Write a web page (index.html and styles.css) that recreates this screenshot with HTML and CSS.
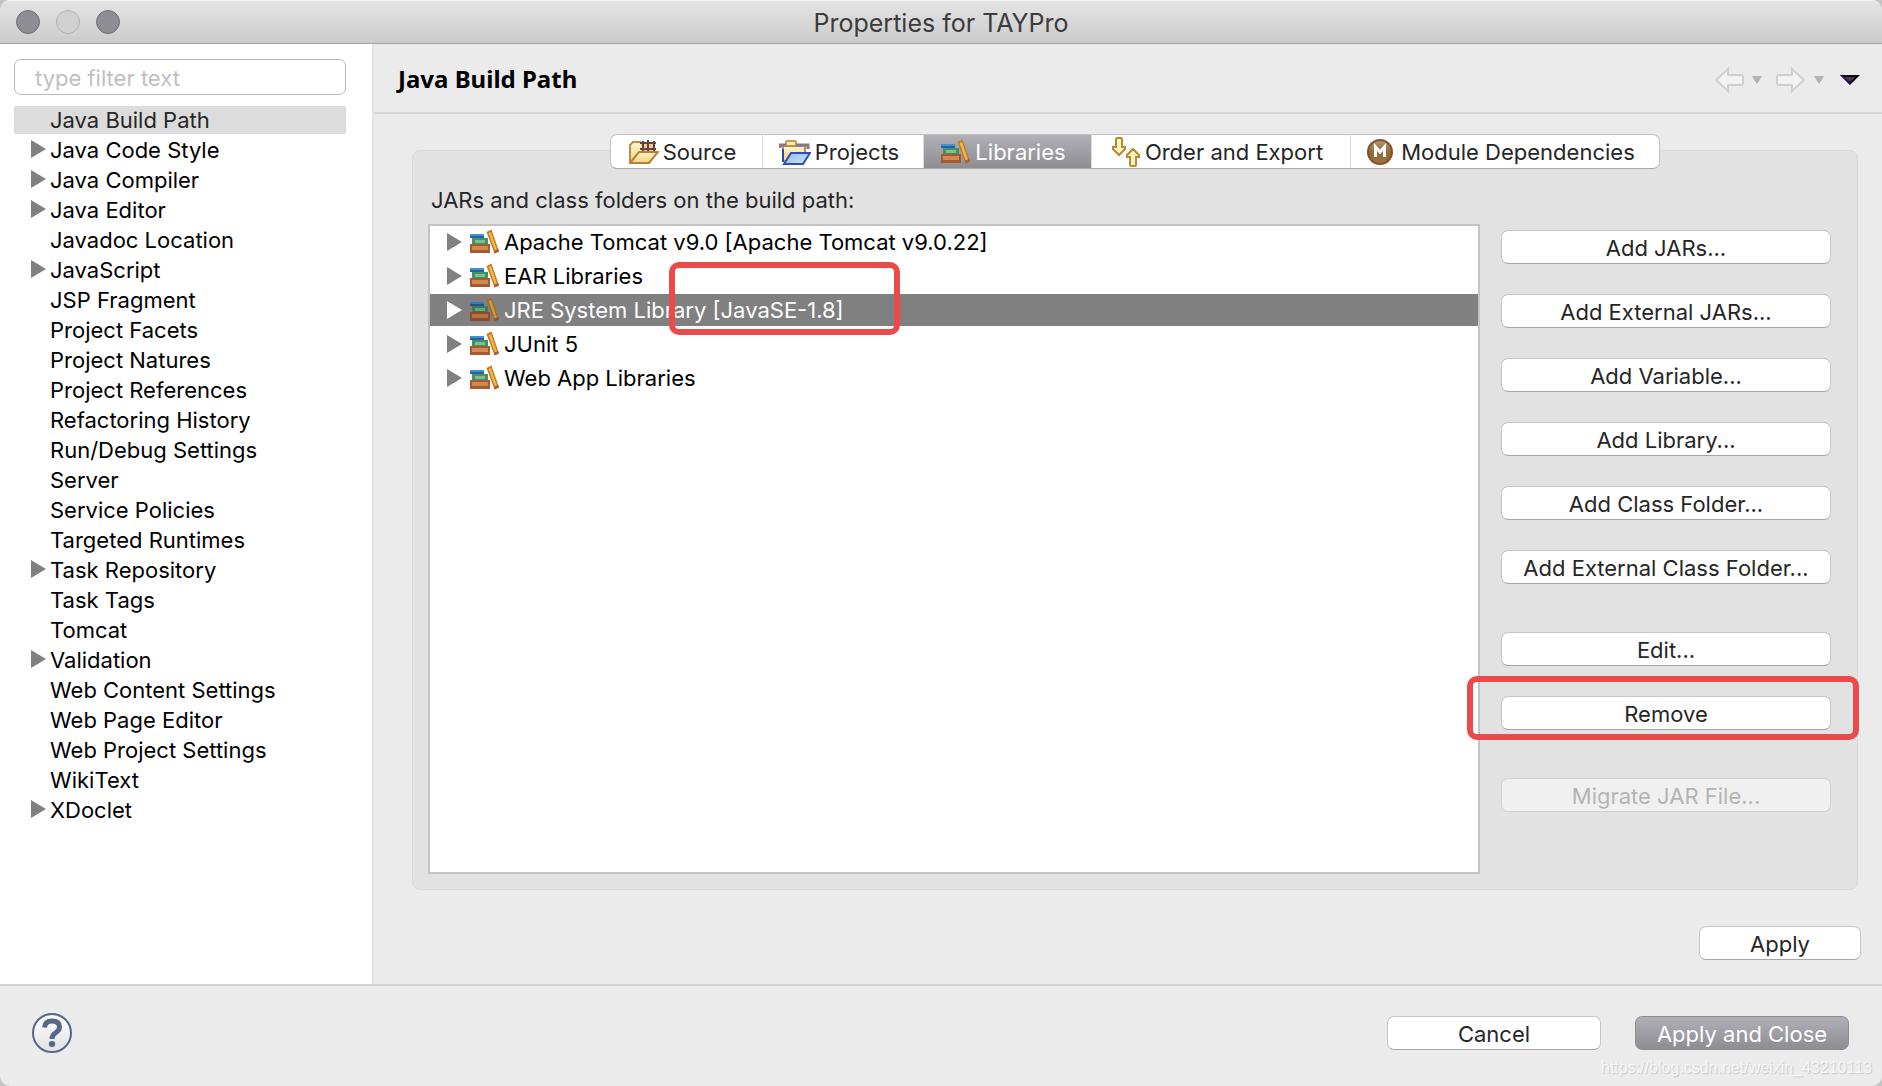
FILE: index.html
```html
<!DOCTYPE html>
<html lang="en">
<head>
<meta charset="utf-8">
<title>Properties for TAYPro</title>
<link rel="stylesheet" href="styles.css">
</head>
<body>
<svg class="defs" aria-hidden="true">
  <defs>
    <linearGradient id="folder" x1="0" y1="0" x2="0" y2="1"><stop offset="0" stop-color="#fdf6d0"/><stop offset="1" stop-color="#f3d27c"/></linearGradient>
    <linearGradient id="blue" x1="0" y1="0" x2="1" y2="1"><stop offset="0" stop-color="#8fbcf0"/><stop offset="1" stop-color="#cfe4fb"/></linearGradient>
    <linearGradient id="help" x1="0" y1="0" x2="0" y2="1"><stop offset="0" stop-color="#ffffff"/><stop offset="1" stop-color="#e2e2e4"/></linearGradient>
    <linearGradient id="bronze" x1="0" y1="0" x2="0" y2="1"><stop offset="0" stop-color="#b79a78"/><stop offset="0.5" stop-color="#94683a"/><stop offset="1" stop-color="#a0703c"/></linearGradient>
    <symbol id="books" viewBox="0 0 30 26">
      <rect x="0" y="5" width="14" height="4" fill="#3f93d0"/><rect x="0" y="7" width="14" height="2" fill="#2d5f9c"/>
      <rect x="2" y="9" width="16" height="7" fill="#3f9367"/><rect x="5" y="11" width="10" height="3" fill="#7fbf8c"/>
      <rect x="0" y="15" width="20" height="9" fill="#a9592f"/><rect x="2" y="17" width="16" height="4" fill="#cf8a52"/>
      <path d="M16.500 3 21.500 0.500 29 22.500 24.500 24.500Z" fill="#c07a2c"/><path d="M18.500 4 21 3 27 21 25 22Z" fill="#f0b840"/>
      <path d="M24 21.500 28.300 20 29 22.500 24.500 24.500Z" fill="#b05f30"/>
    </symbol>
  </defs>
</svg>
<div class="window">
  <header class="titlebar">
    <div class="lights">
      <button class="light" aria-label="Close"></button>
      <button class="light light-off" aria-label="Minimize" disabled></button>
      <button class="light" aria-label="Zoom"></button>
    </div>
    <h1 class="title">Properties for TAYPro</h1>
  </header>
  <div class="body">
    <nav class="sidebar">
      <input class="filter" type="text" placeholder="type filter text" aria-label="type filter text">
      <ul class="tree">
        <li class="current">Java Build Path</li>
        <li class="parent">Java Code Style</li>
        <li class="parent">Java Compiler</li>
        <li class="parent">Java Editor</li>
        <li>Javadoc Location</li>
        <li class="parent">JavaScript</li>
        <li>JSP Fragment</li>
        <li>Project Facets</li>
        <li>Project Natures</li>
        <li>Project References</li>
        <li>Refactoring History</li>
        <li>Run/Debug Settings</li>
        <li>Server</li>
        <li>Service Policies</li>
        <li>Targeted Runtimes</li>
        <li class="parent">Task Repository</li>
        <li>Task Tags</li>
        <li>Tomcat</li>
        <li class="parent">Validation</li>
        <li>Web Content Settings</li>
        <li>Web Page Editor</li>
        <li>Web Project Settings</li>
        <li>WikiText</li>
        <li class="parent">XDoclet</li>
      </ul>
    </nav>
    <main class="page">
      <div class="page-head">
        <h2 class="page-title">Java Build Path</h2>
        <div class="history">
          <button class="tool" aria-label="Back" disabled><svg width="30" height="26" viewBox="0 0 30 26"><path d="M2 13 14 2V8H27Q29 8 29 10V16Q29 18 27 18H14V24Z" fill="#f2f2f2" stroke="#cfcfcf" stroke-width="2"/></svg></button>
          <button class="tool" aria-label="Back history" disabled><svg width="10" height="8" viewBox="0 0 10 8"><path d="M0 0H10L5 8Z" fill="#b2b2b2"/></svg></button>
          <button class="tool forward" aria-label="Forward" disabled><svg width="30" height="26" viewBox="0 0 30 26"><path d="M28 13 16 2V8H3Q1 8 1 10V16Q1 18 3 18H16V24Z" fill="#f2f2f2" stroke="#cfcfcf" stroke-width="2"/></svg></button>
          <button class="tool" aria-label="Forward history" disabled><svg width="10" height="8" viewBox="0 0 10 8"><path d="M0 0H10L5 8Z" fill="#b2b2b2"/></svg></button>
          <button class="tool menu" aria-label="Menu"><svg width="20" height="10" viewBox="0 0 20 10"><path d="M0 0H20L10 10Z" fill="#0c0810"/><path d="M0 0 10 10V8L3 1Z" fill="#3a0ca8"/><path d="M4 2H15L10 7Z" fill="#4a3a4e"/></svg></button>
        </div>
      </div>
      <div class="page-body">
        <section class="panel">
          <div class="tabs" role="tablist">
            <button class="tab tab-source" role="tab"><svg width="30" height="24" viewBox="0 0 30 24"><path d="M1 23V5L4 2H11L13 4H25V12L20 23Z" fill="url(#folder)" stroke="#c08a48" stroke-width="2"/><path d="M12 2H26V11H12Z" fill="#e9cfa4"/><path d="M11 3H27M11 9H27M14 1V12M19 0V12M25 1V12" stroke="#65443a" stroke-width="2"/><path d="M1 23 10 12H29L20 23Z" fill="url(#folder)" stroke="#b98036" stroke-width="2"/></svg>Source</button>
            <button class="tab tab-projects" role="tab"><svg width="32" height="25" viewBox="0 0 32 25"><path d="M4 20V6H26V13L20 22H6Z" fill="url(#folder)" stroke="#c08e45" stroke-width="2"/><path d="M7 5V2Q7 1 8 1H16Q17 1 17 2V5" fill="#fbe9b8" stroke="#c99a54" stroke-width="2"/><path d="M0 5H7M17 5H29V9M1 5V8" stroke="#85788a" stroke-width="3" fill="none"/><path d="M4 9V22" stroke="#3145a8" stroke-width="2"/><path d="M5 24 12 13H31L24 24Z" fill="url(#blue)" stroke="#2f4cb8" stroke-width="2"/></svg>Projects</button>
            <button class="tab tab-libraries" role="tab" aria-selected="true"><svg width="30" height="26"><use href="#books"/></svg>Libraries</button>
            <button class="tab tab-order" role="tab"><svg width="30" height="32" viewBox="0 0 30 32"><path d="M5 3 6 2H10L11 3V11H14V13L8 19 2 13V11H5Z" fill="#fdf3c0" stroke="#b8892f" stroke-width="2"/><path d="M19 29 20 30H24L25 29V21H28V19L22 13 16 19V21H19Z" fill="#fdf3c0" stroke="#b8892f" stroke-width="2"/></svg>Order and Export</button>
            <button class="tab tab-module" role="tab"><svg width="26" height="26" viewBox="0 0 26 26"><circle cx="13" cy="13" r="12" fill="url(#bronze)" stroke="#80512a" stroke-width="2"/><path d="M8.500 18V8L13 13 17.500 8V18" fill="none" stroke="#fff" stroke-width="3"/></svg>Module Dependencies</button>
          </div>
          <p class="caption" id="caption">JARs and class folders on the build path:</p>
          <div class="columns">
            <ul class="entries" aria-labelledby="caption">
              <li class="entry"><svg width="30" height="26"><use href="#books"/></svg>Apache Tomcat v9.0 [Apache Tomcat v9.0.22]</li>
              <li class="entry"><svg width="30" height="26"><use href="#books"/></svg>EAR Libraries</li>
              <li class="entry selected"><svg width="30" height="26"><use href="#books"/></svg>JRE System Library [JavaSE-1.8]<span class="mark mark-version"></span></li>
              <li class="entry"><svg width="30" height="26"><use href="#books"/></svg>JUnit 5</li>
              <li class="entry"><svg width="30" height="26"><use href="#books"/></svg>Web App Libraries</li>
            </ul>
            <div class="actions">
              <button class="btn">Add JARs...</button>
              <button class="btn">Add External JARs...</button>
              <button class="btn">Add Variable...</button>
              <button class="btn">Add Library...</button>
              <button class="btn">Add Class Folder...</button>
              <button class="btn">Add External Class Folder...</button>
              <button class="btn group">Edit...</button>
              <div class="marked"><button class="btn">Remove</button><span class="mark mark-remove"></span></div>
              <button class="btn group" disabled>Migrate JAR File...</button>
            </div>
          </div>
        </section>
        <div class="apply-row"><button class="btn btn-apply">Apply</button></div>
      </div>
    </main>
  </div>
  <footer class="footer">
    <button class="help" aria-label="Help"><svg width="40" height="40" viewBox="0 0 40 40"><circle cx="20" cy="20" r="19" fill="url(#help)" stroke="#56678a" stroke-width="2"/><path d="M12.500 14.500Q13 8 20 8 27.500 8 27.500 14 27.500 17 24 19.500 20 22 20 26" fill="none" stroke="#56678a" stroke-width="5"/><ellipse cx="20" cy="31" rx="3.200" ry="3" fill="#56678a"/></svg></button>
    <div class="dialog-actions">
      <button class="btn btn-wide">Cancel</button>
      <button class="btn btn-wide btn-default">Apply and Close</button>
    </div>
    <span class="watermark">https://blog.csdn.net/weixin_43210113</span>
  </footer>
</div>
</body>
</html>
```
FILE: styles.css
```css
* { box-sizing: border-box; }

body {
  margin: 0;
  background: #c4c4c4;
  color: #000;
  font: 22px/30px Inter, "Liberation Sans", sans-serif;
}

button, input { font: inherit; color: inherit; }
button { padding: 0; border: 0; background: none; }
ul { list-style: none; margin: 0; padding: 0; }
h1, h2, p { margin: 0; }
svg { flex: none; display: block; }
.defs { position: absolute; width: 0; height: 0; }

.window {
  display: flex;
  flex-direction: column;
  min-height: 100vh;
  border-radius: 10px;
  overflow: hidden;
  background: #ebebeb;
}

.titlebar {
  display: grid;
  grid-template-columns: 1fr auto 1fr;
  align-items: center;
  height: 44px;
  padding: 0 16px;
  background: linear-gradient(#e4e4e4, #cbcbcb);
  border-top: 1px solid #f4f4f4;
  border-bottom: 1px solid #a3a3a3;
}
.lights { display: flex; gap: 16px; }
.light {
  width: 24px;
  height: 24px;
  border: 1px solid #73727a;
  border-radius: 50%;
  background: #8e8d93;
}
.light-off { background: #d0d0d0; border-color: #b0b0b0; }
.title { padding-top: 2px; font-size: 25px; font-weight: 400; color: #3c3c3c; }

.body { display: flex; flex: 1; }

.sidebar {
  flex: none;
  width: 374px;
  padding: 15px 26px 0 14px;
  background: #fff;
  border-right: 2px solid #e4e4e4;
}
.filter {
  display: block;
  width: 100%;
  height: 36px;
  padding: 2px 20px 0;
  border: 1px solid #b8b8b8;
  border-radius: 7px;
  background: #fff;
}
.filter::placeholder { color: #bfbfbf; opacity: 1; }
.tree { padding-top: 11px; }
.tree li {
  position: relative;
  height: 30px;
  padding-left: 36px;
  line-height: 29px;
}
.tree .current {
  color: #262626;
  background: linear-gradient(#dcdcdc, #dcdcdc) top / 100% 28px no-repeat;
}
.parent::before, .entry::before {
  content: "";
  width: 15px;
  height: 18px;
  background: #808080;
  clip-path: polygon(0 0, 100% 50%, 0 100%);
}
.parent::before { position: absolute; left: 17px; top: 4px; }

.page { flex: 1; display: flex; flex-direction: column; min-width: 0; }
.page-head {
  display: flex;
  justify-content: space-between;
  align-items: center;
  height: 70px;
  padding: 4px 22px 0 24px;
  border-bottom: 2px solid #d5d5d5;
}
.page-title { padding-bottom: 2px; font: 700 24px/30px "Noto Sans", "Open Sans", sans-serif; }
.history { display: flex; align-items: center; gap: 8px; }
.forward { margin-left: 6px; }
.menu { margin-left: 8px; }

.page-body { flex: 1; display: flex; flex-direction: column; padding: 36px 24px 20px 38px; }
.panel {
  padding: 0 15px 15px;
  background: #e2e2e2;
  border: 1px solid #dadada;
  border-radius: 8px;
}
.tabs {
  display: flex;
  width: max-content;
  height: 35px;
  margin: -17px auto 0;
  background: #fff;
  border: 1px solid #c2c2c2;
  border-bottom-color: #a8a8a8;
  border-radius: 7px;
}
.tab {
  display: flex;
  align-items: center;
  justify-content: center;
  gap: 4px;
  padding: 1px 8px 0 0;
  color: #262626;
}
.tab + .tab { border-left: 1px solid #dcdcdc; }
.tab-source { width: 151px; }
.tab-projects { width: 161px; }
.tab-libraries { width: 168px; }
.tab-order { width: 259px; }
.tab-module { width: 309px; gap: 8px; }
.tab[aria-selected="true"] {
  color: #fff;
  background: linear-gradient(#b1b0b6, #8e8d92);
}

.caption { padding: 16px 3px 9px; color: #262626; }
.columns { display: flex; gap: 21px; align-items: stretch; margin-right: 11px; }
.entries {
  flex: 1;
  min-height: 650px;
  background: #fff;
  border: 2px solid #c3c3c3;
}
.entry {
  position: relative;
  display: flex;
  align-items: center;
  height: 34px;
  padding: 0 0 2px 17px;
}
.entry svg { margin: 0 4px 0 8px; }
.selected {
  color: #fff;
  background: linear-gradient(#808080, #808080) top / 100% 32px no-repeat;
}
.selected::before { background: #fff; }
.selected svg { filter: brightness(0.85); }

.actions { display: flex; flex-direction: column; gap: 30px; width: 330px; padding-top: 6px; }
.btn {
  height: 34px;
  padding-top: 1px;
  border: 1px solid #c6c6c6;
  border-bottom-color: #a6a6a6;
  border-radius: 7px;
  background: #fff;
  color: #262626;
  line-height: 30px;
}
.btn:disabled { background: #f0f0f0; color: #b4b4b4; border-color: #d0d0d0; }
.group { margin-top: 18px; }
.marked { position: relative; display: grid; }

.mark {
  position: absolute;
  border: 6px solid #ec4a4a;
  border-radius: 10px;
  pointer-events: none;
}
.mark-version { left: 239px; top: -32px; width: 231px; height: 73px; }
.mark-remove { inset: -20px -28px -10px -34px; }

.apply-row { display: flex; justify-content: flex-end; padding-top: 36px; margin-right: -3px; }
.btn-apply { width: 162px; }

.footer {
  position: relative;
  display: flex;
  justify-content: space-between;
  align-items: center;
  height: 102px;
  padding: 0 33px 6px 32px;
  border-top: 2px solid #d2d2d2;
}
.dialog-actions { display: flex; gap: 34px; }
.btn-wide { width: 214px; }
.btn-default {
  border-color: #8e8d92;
  background: linear-gradient(#b1b0b6, #8e8d92);
  color: #fff;
}
.watermark {
  position: absolute;
  right: 10px;
  bottom: 8px;
  font: 16px/20px "Liberation Sans", sans-serif;
  color: #f6f6f6;
  text-shadow: 1px 1px 1px #c8c8c8;
}
```
